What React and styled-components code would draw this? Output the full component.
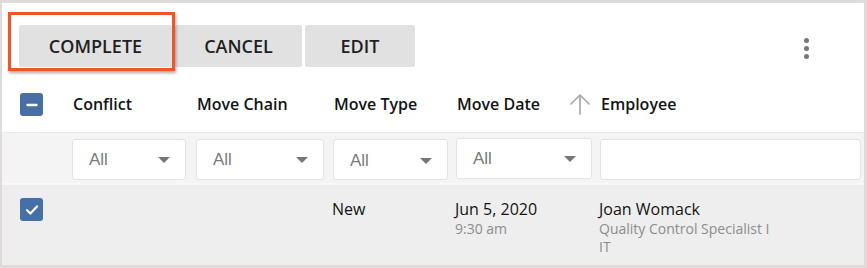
import styled, { createGlobalStyle } from "styled-components"

const GlobalStyle = createGlobalStyle`
  html, body {
    margin: 0;
    padding: 0;
    background: #dfdbdb;
  }
  body {
    font-family: "Open Sans", "Noto Sans", sans-serif;
    color: #151515;
  }
`

const columns = [
  { key: "conflict", label: "Conflict" },
  { key: "chain", label: "Move Chain" },
  { key: "type", label: "Move Type" },
  { key: "date", label: "Move Date" },
  { key: "employee", label: "Employee", sorted: true },
]

export default function App() {
  return (
    <>
      <GlobalStyle />
      <Frame>
        <Toolbar>
          <ButtonGroup>
            <Highlighted>
              <ActionButton $w={153}>Complete</ActionButton>
              <Callout />
            </Highlighted>
            <ActionButton $w={127}>Cancel</ActionButton>
            <ActionButton $w={110}>Edit</ActionButton>
          </ButtonGroup>
          <Kebab>
            <Dot />
            <Dot />
            <Dot />
          </Kebab>
        </Toolbar>

        <HeaderRow>
          <CheckCell>
            <Checkbox>
              <svg width="12" height="12" viewBox="0 0 12 12">
                <path d="M1.5 6h9" stroke="#fff" strokeWidth="2.4" strokeLinecap="round" />
              </svg>
            </Checkbox>
          </CheckCell>
          {columns.map((c) => (
            <HeaderCell key={c.key}>
              {c.sorted && (
                <SortArrow>
                  <svg width="22" height="22" viewBox="0 0 22 22" fill="none">
                    <path
                      d="M2 11L11 2l9 9M11 2v19"
                      stroke="#a8a8a8"
                      strokeWidth="1.7"
                      strokeLinecap="round"
                      strokeLinejoin="round"
                    />
                  </svg>
                </SortArrow>
              )}
              {c.label}
            </HeaderCell>
          ))}
        </HeaderRow>

        <FilterRow>
          <div />
          <FilterCell>
            <Select>
              All
              <Caret />
            </Select>
          </FilterCell>
          <FilterCell $gap={9}>
            <Select>
              All
              <Caret />
            </Select>
          </FilterCell>
          <FilterCell $gap={8}>
            <Select $low>
              All
              <Caret />
            </Select>
          </FilterCell>
          <FilterCell $gap={8}>
            <Select $high>
              All
              <Caret />
            </Select>
          </FilterCell>
          <FilterCell $gap={3}>
            <Select />
          </FilterCell>
        </FilterRow>

        <DataRow>
          <CheckCell $top>
            <Checkbox>
              <svg width="14" height="12" viewBox="0 0 14 12">
                <path
                  d="M2 6.2l3.4 3.3L12 2.5"
                  stroke="#fff"
                  strokeWidth="2.2"
                  fill="none"
                  strokeLinecap="round"
                  strokeLinejoin="round"
                />
              </svg>
            </Checkbox>
          </CheckCell>
          <DataCell />
          <DataCell />
          <DataCell>
            <Primary>New</Primary>
          </DataCell>
          <DataCell>
            <Primary>Jun 5, 2020</Primary>
            <Secondary>9:30 am</Secondary>
          </DataCell>
          <DataCell>
            <Primary>Joan Womack</Primary>
            <Secondary>Quality Control Specialist I</Secondary>
            <Secondary>IT</Secondary>
          </DataCell>
        </DataRow>
      </Frame>
    </>
  )
}

const grid = `
  display: grid;
  grid-template-columns: 70px 124px 137px 123px 144px 1fr;
`

export const Frame = styled.div`
  margin: 3px 3px 0 2px;
  height: 262px;
  background: #ffffff;
  overflow: hidden;
`

export const Toolbar = styled.div`
  height: 79px;
  display: flex;
  align-items: flex-start;
  justify-content: space-between;
  padding: 22px 0 0 17px;
  box-sizing: border-box;
`

export const ButtonGroup = styled.div`
  display: flex;
  gap: 3px;
`

export const Highlighted = styled.div`
  position: relative;
  display: flex;
`

export const Callout = styled.div`
  position: absolute;
  left: -11px;
  top: -13px;
  width: 167px;
  height: 59px;
  box-sizing: border-box;
  border: 3px solid #ef5527;
  box-shadow: 1px 2px 3px rgba(0, 0, 0, 0.35);
  pointer-events: none;
`

export const ActionButton = styled.button`
  height: 42px;
  width: ${(p) => p.$w}px;
  padding: 0;
  border: none;
  border-radius: 2px;
  background: #e1e1e1;
  color: #1f1f1f;
  font-family: "Open Sans", "Noto Sans", sans-serif;
  font-size: 18px;
  font-weight: 600;
  text-transform: uppercase;
`

export const Kebab = styled.div`
  display: flex;
  flex-direction: column;
  gap: 3px;
  margin: 13px 55px 0 0;
`

export const Dot = styled.span`
  width: 5px;
  height: 5px;
  border-radius: 50%;
  background: #767676;
`

export const HeaderRow = styled.div`
  ${grid}
  height: 51px;
  padding-top: 11px;
  box-sizing: border-box;
  border-bottom: 1px solid #ebebeb;
`

export const CheckCell = styled.div`
  padding-left: 18px;
  padding-top: ${(p) => (p.$top ? "13px" : "0")};
`

export const Checkbox = styled.div`
  width: 23px;
  height: 23px;
  border-radius: 3px;
  background: #4670a5;
  display: flex;
  align-items: center;
  justify-content: center;
`

export const HeaderCell = styled.div`
  position: relative;
  height: 22px;
  display: flex;
  align-items: center;
  font-size: 16px;
  font-weight: 600;
  color: #141414;
  padding-left: 1px;
`

export const SortArrow = styled.span`
  position: absolute;
  left: -31px;
  top: 0;
  display: flex;
`

export const FilterRow = styled.div`
  ${grid}
  height: 52px;
  padding-top: 6px;
  box-sizing: border-box;
  background: #f4f4f4;
  border-bottom: 2px solid #f9f9f9;
`

export const FilterCell = styled.div`
  padding-right: ${(p) => p.$gap ?? 10}px;
`

export const Select = styled.div`
  height: 41px;
  box-sizing: border-box;
  background: #ffffff;
  border: 1px solid #e3e3e3;
  border-radius: 3px;
  display: flex;
  align-items: center;
  justify-content: space-between;
  padding: ${(p) => (p.$low ? "3px" : "0")} 15px 0 16px;
  margin-top: ${(p) => (p.$high ? "-1px" : "0")};
  font-family: "Liberation Sans", Arial, sans-serif;
  font-size: 17px;
  color: #7a7a7a;
`

export const Caret = styled.span`
  width: 0;
  height: 0;
  border-left: 6px solid transparent;
  border-right: 6px solid transparent;
  border-top: 6px solid #777777;
`

export const DataRow = styled.div`
  ${grid}
  height: 80px;
  background: #eeeeee;
`

export const DataCell = styled.div`
  padding-top: 13px;
  display: flex;
  flex-direction: column;
  margin-left: -1px;
`

export const Primary = styled.div`
  font-size: 16px;
  line-height: 22px;
  color: #141414;
`

export const Secondary = styled.div`
  font-size: 14px;
  line-height: 18px;
  color: #8c8c8c;
`
